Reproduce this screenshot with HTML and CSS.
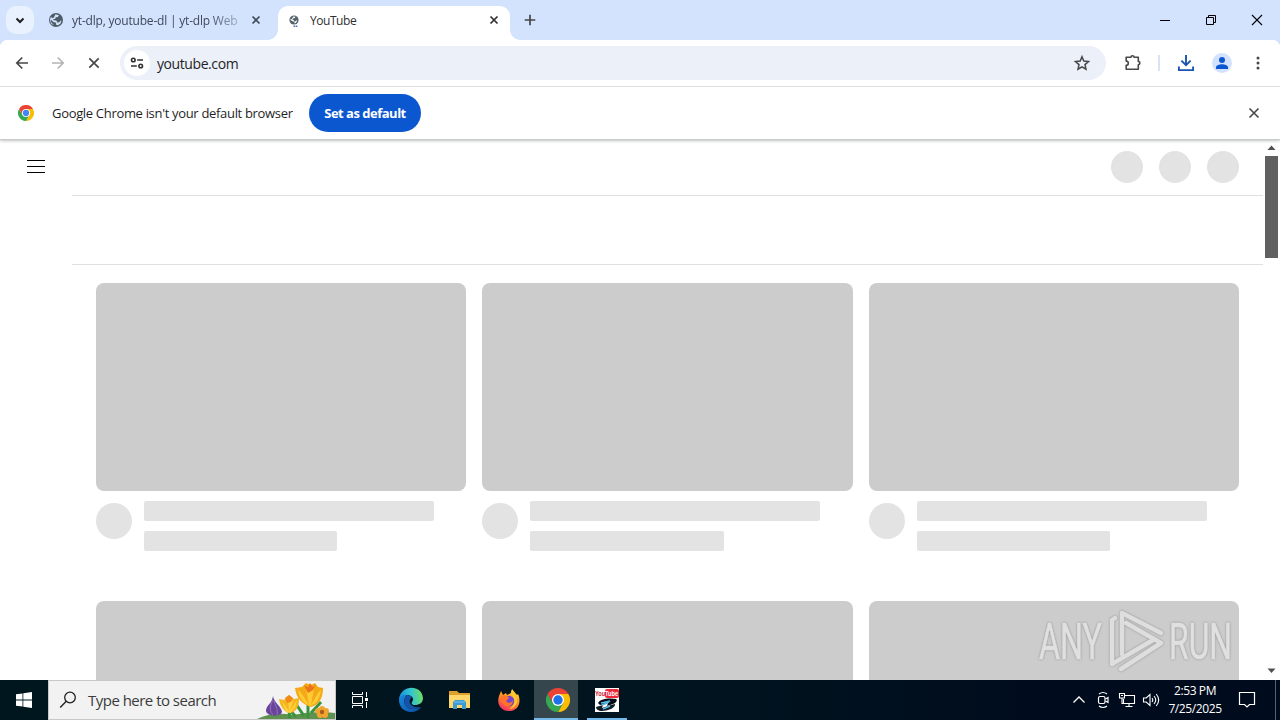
FILE: index.html
```html
<!DOCTYPE html>
<html lang="en">
<head>
    <meta charset="UTF-8">
    <title>YouTube</title>
    <link rel="stylesheet" href="styles.css">
</head>
<body>
<div class="screen">
    <div class="tabstrip">
        <div class="tab-search">
            <svg width="28" height="28" viewBox="0 0 28 28"><path d="M10.5 12.5l3.5 3.5 3.5-3.5" fill="none" stroke="#1f1f1f" stroke-width="2"/></svg>
        </div>
        <div class="tab">
            <svg class="tab-icon" width="16" height="16" viewBox="0 0 16 16">
                <circle cx="8" cy="8" r="7" fill="#4d5b66"/>
                <path d="M7.5 2.3L11 3.2 9.8 5l-2 .3L7 7l-2 .3.5 1 2.800.2 1 2 2-.3 1.200-1.500 1-.200-1 3L10 13.200l-1.700-.2-.3-2.300-2.600-.700L3 7.800 2.600 9l1.200 2.300 2.300 1.600-3-1L1.900 8l1-3 2 1.200L6 5.200z" fill="#d3e2fd"/>
            </svg>
            <span class="tab-title faded">yt-dlp, youtube-dl | yt-dlp Web</span>
            <svg class="tab-close" width="16" height="16" viewBox="0 0 16 16"><path d="M4.500 4.500l7 7m0-7l-7 7" stroke="#40485a" stroke-width="1.600"/></svg>
        </div>
        <div class="tab active">
            <svg class="tab-icon" width="16" height="16" viewBox="0 0 16 16">
                <circle cx="8" cy="8" r="4.600" fill="#55636c"/>
                <path d="M7.300 4.500l2.200.300-.8 1.200-1.300.3-.5 1-1.200.2 1.900.600.6 1.300 1.400-.2.900-.900.6.2-.8 2-1.500.9-.6-1.600-1.600-.6L4.500 8l.2-1.300 1.200.5z" fill="#fff"/>
                <path d="M7.500 14.200h4" stroke="#4870b0" stroke-width="1.500" stroke-dasharray="1.600 .6"/>
            </svg>
            <span class="tab-title">YouTube</span>
            <svg class="tab-close" width="16" height="16" viewBox="0 0 16 16"><path d="M4.500 4.500l7 7m0-7l-7 7" stroke="#303030" stroke-width="1.700"/></svg>
        </div>
        <svg class="new-tab" width="20" height="20" viewBox="0 0 20 20"><path d="M10 4.700v10.600M4.700 10h10.600" stroke="#444746" stroke-width="1.700"/></svg>
        <div class="window-buttons">
            <svg width="46" height="40" viewBox="0 0 46 40"><path d="M18 20.500h10" stroke="#000" fill="none"/></svg>
            <svg width="46" height="40" viewBox="0 0 46 40"><path d="M18.500 17.500h7v7h-7zM20.500 17.500v-2h7v7h-2" stroke="#000" fill="none"/></svg>
            <svg width="46" height="40" viewBox="0 0 46 40"><path d="M18 15l10 10m0-10l-10 10" stroke="#000" stroke-width="1.100" fill="none"/></svg>
        </div>
    </div>

    <div class="toolbar">
        <div class="nav">
            <svg width="20" height="20" viewBox="0 0 20 20"><path d="M16 10H5m5.300-5.500L4.800 10l5.500 5.500" fill="none" stroke="#474747" stroke-width="1.700"/></svg>
            <svg width="20" height="20" viewBox="0 0 20 20"><path d="M4 10h11M9.700 4.500l5.500 5.500-5.500 5.500" fill="none" stroke="#b4b4b4" stroke-width="1.700"/></svg>
            <svg width="20" height="20" viewBox="0 0 20 20"><path d="M5.300 5.300l9.400 9.400m0-9.400l-9.400 9.400" stroke="#474747" stroke-width="1.700"/></svg>
        </div>
        <div class="omnibox">
            <span class="site-chip">
                <svg width="16" height="16" viewBox="0 0 16 16" fill="none" stroke="#303030" stroke-width="1.600"><circle cx="4.300" cy="5" r="1.800"/><path d="M8.200 5H14M2 11h5.800"/><circle cx="11.700" cy="11" r="1.800"/></svg>
            </span>
            <span class="url">youtube.com</span>
            <svg class="star" width="18" height="18" viewBox="0 0 18 18"><path d="M9 2.800l1.800 4.300 4.700.4-3.500 3.100 1 4.600L9 12.800l-4 2.400 1-4.600-3.500-3.100 4.700-.4z" fill="none" stroke="#474747" stroke-width="1.500"/></svg>
        </div>
        <div class="actions">
            <svg width="20" height="20" viewBox="0 0 20 20"><path d="M3.200 4.200H8a1.500 1.500 0 0 1 3 0h4.300v4.300a1.600 1.600 0 0 1 0 3.200v4.500H3.200v-3.900a2.100 2.100 0 0 0 0-4.200V4.200z" fill="none" stroke="#474747" stroke-width="1.600" stroke-linejoin="round"/></svg>
            <span class="divider"></span>
            <svg width="20" height="20" viewBox="0 0 20 20"><path d="M10 2v9.500M5.400 7.600l4.600 4.600 4.600-4.600M2.900 13.500v3.600h14.200v-3.600" fill="none" stroke="#1a56b0" stroke-width="1.900"/></svg>
            <svg width="20" height="20" viewBox="0 0 20 20"><circle cx="10" cy="10" r="10" fill="#d3e3fd"/><circle cx="10" cy="7" r="3" fill="#0b57d0"/><path d="M4 16v-1.800c0-2 3.500-3 6-3s6 1 6 3V16z" fill="#0b57d0"/></svg>
            <svg width="20" height="20" viewBox="0 0 20 20" fill="#474747"><circle cx="10" cy="5" r="1.500"/><circle cx="10" cy="10" r="1.500"/><circle cx="10" cy="15" r="1.500"/></svg>
        </div>
    </div>

    <div class="infobar">
        <svg width="16" height="16" viewBox="0 0 24 24">
            <path d="M12 6h10.400A12 12 0 0 1 12 24l5.200-9z" fill="#fbbc04"/>
            <path d="M1.600 6l5.200 9H17.200L12 24A12 12 0 0 1 1.600 6z" fill="#34a853"/>
            <path d="M1.600 6l5.200 9L12 6h10.400A12 12 0 0 0 1.600 6z" fill="#ea4335"/>
            <circle cx="12" cy="12" r="6" fill="#fff"/><circle cx="12" cy="12" r="4.700" fill="#4285f4"/>
        </svg>
        <span class="message">Google Chrome isn't your default browser</span>
        <button class="default-btn">Set as default</button>
        <svg class="dismiss" width="16" height="16" viewBox="0 0 16 16"><path d="M3.500 3.500l9 9m0-9l-9 9" stroke="#474747" stroke-width="1.600"/></svg>
    </div>

    <div class="viewport">
        <div class="page">
            <div class="masthead">
                <svg width="18" height="14" viewBox="0 0 18 14"><path d="M0 .5h18M0 6.500h18M0 12.500h18" stroke="#000"/></svg>
                <div class="masthead-skeleton"><i></i><i></i><i></i></div>
            </div>
            <div class="chips"></div>
            <div class="video-grid">
                <div class="video"><div class="thumb"></div><div class="details"><div class="avatar"></div><div class="lines"><div class="line"></div><div class="line short"></div></div></div></div>
                <div class="video"><div class="thumb"></div><div class="details"><div class="avatar"></div><div class="lines"><div class="line"></div><div class="line short"></div></div></div></div>
                <div class="video"><div class="thumb"></div><div class="details"><div class="avatar"></div><div class="lines"><div class="line"></div><div class="line short"></div></div></div></div>
                <div class="video"><div class="thumb"></div></div>
                <div class="video"><div class="thumb"></div></div>
                <div class="video"><div class="thumb"></div></div>
            </div>
        </div>
        <div class="scrollbar">
            <svg width="15" height="16" viewBox="0 0 15 16"><path d="M3.500 10l4-4.500 4 4.500z" fill="#505050"/></svg>
            <div class="scroll-thumb"></div>
            <svg class="scroll-down" width="15" height="16" viewBox="0 0 15 16"><path d="M3.500 5.500l4 4.500 4-4.500z" fill="#505050"/></svg>
        </div>
        <svg class="watermark" width="210" height="70" viewBox="0 0 210 70">
            <g class="mark-text">
                <text x="4" y="54" textLength="63" lengthAdjust="spacingAndGlyphs">ANY</text>
                <text x="134" y="54" textLength="63" lengthAdjust="spacingAndGlyphs">RUN</text>
            </g>
            <g class="mark-logo">
                <path d="M87 49V8l39 20"/>
                <path d="M91 18l35 20-40 26"/>
                <path d="M80 13l-3 2v44l41-24"/>
            </g>
        </svg>
    </div>

    <div class="taskbar">
        <div class="start">
            <svg width="16" height="16" viewBox="0 0 16 16" fill="#fff"><path d="M0 2.300l6.500-.9v6.200H0zM7.300 1.300L16 0v7.600H7.300zM0 8.400h6.500v6.200L0 13.700zM7.300 8.400H16V16l-8.700-1.300z"/></svg>
        </div>
        <div class="search">
            <svg width="18" height="18" viewBox="0 0 18 18"><circle cx="11" cy="6.500" r="5.300" fill="none" stroke="#222" stroke-width="1.300"/><path d="M7.200 10.300L1.200 16.500" stroke="#222" stroke-width="1.400"/></svg>
            <span>Type here to search</span>
            <svg class="flowers" width="80" height="38" viewBox="0 0 80 38">
                <path d="M2 38Q18 30 38 34Q60 29 80 32V38z" fill="#60924f"/>
                <path d="M35 37L33 24M53 37l0-15M41 36l-7-8M49 35l-8-12M56 32l10-11" stroke="#39933c" stroke-width="3" fill="none"/>
                <path d="M18 15c1 7 9 11 9 16-1 5-15 5-16-1 0-6 6-7 7-15z" fill="#68449b"/>
                <path d="M18 19c-4 7-3 12 0 15m1-14c2 6 4 9 3 14" stroke="#9572bb" fill="none"/>
                <path d="M24 18l5 1 5-5 5 4 5-1c0 8-2 14-9 15-6-1-10-7-11-14z" fill="#f5b51d"/>
                <path d="M26 19l8 11-1-12 3-1 2 3-3 10 7-11-2 8-5 5-4-1z" fill="#ffcf3c"/>
                <path d="M40 7l7-1 4-4 5 2 4-2 3 4 5 1c0 10-4 17-12 19-8-2-15-9-16-19z" fill="#f4aa16"/>
                <path d="M43 9c4 3 7 9 11 15l-3-17 4-4 4 4-3 17c4-6 6-12 10-15-1 9-5 14-11 16-6-2-11-8-12-16z" fill="#ffcb35"/>
                <path d="M49 4l4 2 2-4 3 4 3-3-3 6-5 3z" fill="#ec7418"/>
                <path d="M30 17l4-3 4 3-2 4-4 1z" fill="#ef8a1b"/>
                <g fill="#f2a52e"><circle cx="67" cy="28" r="3"/><circle cx="71" cy="30" r="3"/><circle cx="70" cy="34" r="3"/><circle cx="65" cy="34" r="3"/><circle cx="63" cy="30" r="3"/></g><circle cx="67" cy="31" r="2.200" fill="#a95c20"/>
            </svg>
        </div>
        <div class="apps">
            <div class="app">
                <svg width="18" height="18" viewBox="0 0 18 18" fill="none" stroke="#fff"><path d="M1.500 1v2.500h10V1M1.500 5.500h10v7h-10zM1.500 17v-2.500h10V17M15.500 1v5M15.500 11v6"/><path d="M14 7h3v3h-3z" fill="#fff" stroke="none"/></svg>
            </div>
            <div class="app">
                <svg width="26" height="26" viewBox="0 0 26 26">
                    <defs>
                        <linearGradient id="edge-top" x1="0" y1=".5" x2="1" y2=".4"><stop offset="0" stop-color="#1491dc"/><stop offset=".5" stop-color="#30c3d3"/><stop offset="1" stop-color="#71df60"/></linearGradient>
                        <linearGradient id="edge-low" x1="0" y1="0" x2=".7" y2="1"><stop offset="0" stop-color="#188be0"/><stop offset="1" stop-color="#1056b0"/></linearGradient>
                    </defs>
                    <path d="M1 13C2-3 24-3 25 11c0 5-4 7-8 7-3 0-4-2-3-3 3-4-1-7-5-7-4 0-7 2-8 5z" fill="url(#edge-top)"/>
                    <path d="M1 13c0-4 4-6 8-5-5 4-3 14 6 14 4 0 6-1 8-2-2 3-6 5-10 5C6 25 1 20 1 13z" fill="url(#edge-low)"/>
                    <path d="M9 8c-5 5-3 14 6 14 4 0 6-1 8-2-9 2-15-5-9-10-1-1-3-2-5-2z" fill="#1453a6"/>
                </svg>
            </div>
            <div class="app">
                <svg width="24" height="24" viewBox="0 0 24 24"><path d="M1 3h8l2 2h11v15H1z" fill="#dda02c"/><path d="M1 7h21v13H1z" fill="#ffd669"/><path d="M5 21v-7l2-2h9l2 2v7h-4v-4H9v4z" fill="#3c9ad5"/><path d="M6 14h11" stroke="#76c5ec"/></svg>
            </div>
            <div class="app">
                <svg width="24" height="24" viewBox="0 0 24 24">
                    <defs><linearGradient id="fox" x1=".8" y1="0" x2=".3" y2="1"><stop offset="0" stop-color="#ffe33f"/><stop offset=".45" stop-color="#ff9722"/><stop offset="1" stop-color="#f42c68"/></linearGradient></defs>
                    <path d="M4 3l2 4 3-2 1 2 4-2 1-4 5 6 1-1c3 6 2 16-8 17C5 24-1 17 2 8z" fill="url(#fox)"/>
                    <circle cx="12" cy="13" r="5.300" fill="#7345d2"/><path d="M5 8c3-2 6 0 7 2l-3 3c2 3 6 2 7-1 0 5-4 7-7 6-5-2-6-7-4-10z" fill="#ff7428"/>
                    <path d="M15 2c1 5 6 6 5 12-1 4-4 7-8 7 5-3 7-8 4-12-2-2-3-5-1-7z" fill="#ffc62d"/>
                </svg>
            </div>
            <div class="app running">
                <svg width="24" height="24" viewBox="0 0 24 24">
                    <path d="M12 6h10.400A12 12 0 0 1 12 24l5.200-9z" fill="#fbbc04"/>
                    <path d="M1.600 6l5.200 9H17.200L12 24A12 12 0 0 1 1.600 6z" fill="#34a853"/>
                    <path d="M1.600 6l5.200 9L12 6h10.400A12 12 0 0 0 1.600 6z" fill="#ea4335"/>
                    <circle cx="12" cy="12" r="6" fill="#fff"/><circle cx="12" cy="12" r="4.700" fill="#1a73e8"/>
                </svg>
            </div>
            <div class="app opened">
                <svg width="24" height="24" viewBox="0 0 24 24">
                    <path d="M0 0h24v24H0z" fill="#fff"/><rect x="10" y="1" width="14" height="9" rx="2" fill="#ed2939"/>
                    <text class="yt" x="0" y="8" textLength="23" lengthAdjust="spacingAndGlyphs"><tspan fill="#c51e30">You</tspan><tspan fill="#fff">Tube</tspan></text>
                    <path d="M3 15c3-5 13-5 18-4 2 1 0 4-3 5l-6 2 1-3-8 2z" fill="#050b14"/><path d="M1 19l7-2-1 3 9-3 4-1c1 3-6 7-13 7-4 0-6-2-6-4z" fill="#101b26"/><path d="M6 15l9-2-3 2-5 2M8 21l7-3" fill="none" stroke="#55b9e5" stroke-width="1.500"/>
                </svg>
            </div>
        </div>
        <div class="tray">
            <svg width="14" height="20" viewBox="0 0 14 20"><path d="M1.500 12.500L7 7l5.500 5.500" fill="none" stroke="#fff" stroke-width="1.300"/></svg>
            <svg width="14" height="20" viewBox="0 0 14 20" fill="none" stroke="#fff" stroke-width="1.200"><rect x="2.500" y="6.500" width="6.500" height="7" rx="1.500"/><path d="M9.500 9l2.500-1.500v5L9.500 11M3 4q4-3 8 0M3 16q4 3 8 0"/></svg>
            <svg width="18" height="20" viewBox="0 0 18 20" fill="none" stroke="#fff" stroke-width="1.100"><path d="M6.500 5.500h10v8h-11V9M11 13.500v3M7.500 16.500h7"/><path d="M1.500 3.500h5V8h-5zM4 8v5.500h2M3 5.500h2"/></svg>
            <svg width="18" height="20" viewBox="0 0 18 20" fill="none" stroke="#fff" stroke-width="1.100"><path d="M1.500 8h2.700L8 4.500v11L4.200 12H1.500zM10 8q1.500 2 0 4M12 6q3.500 4 0 8M14.200 4q5 6 0 12"/></svg>
        </div>
        <div class="clock"><span>2:53 PM</span><span>7/25/2025</span></div>
        <svg class="notifications" width="18" height="18" viewBox="0 0 18 18"><path d="M1.500 1.500h15v12h-5L9 16l-2.500-2.500h-5z" fill="none" stroke="#fff" stroke-width="1.200"/></svg>
        <div class="show-desktop"></div>
    </div>
</div>
</body>
</html>
```
FILE: styles.css
```css
*{
    box-sizing: border-box;
}
body{
    margin: 0;
    font-family: "Open Sans", "Noto Sans", sans-serif;
    font-size: 12px;
    color: #1f1f1f;
}
svg{
    display: block;
    flex: none;
}
.screen{
    display: flex;
    flex-direction: column;
    width: 1280px;
    height: 720px;
    overflow: hidden;
    background: #fff;
}

/* tabs */
.tabstrip{
    display: flex;
    align-items: center;
    height: 40px;
    flex: none;
    padding-left: 6px;
    background: #d3e2fd;
}
.tab-search{
    width: 28px;
    height: 28px;
    border-radius: 10px;
    background: #e9f0fe;
}
.tab{
    display: flex;
    align-items: center;
    width: 232px;
    height: 34px;
    padding: 0 8px 6px;
    margin: 6px 0 0 6px;
}
.tab.active{
    position: relative;
    border-radius: 10px 10px 0 0;
    background: #fff;
}
.tab.active:before,
.tab.active:after{
    content: "";
    position: absolute;
    bottom: 0;
    width: 10px;
    height: 10px;
}
.tab.active:before{
    left: -10px;
    background: radial-gradient(circle at 0 0, transparent 9.5px, #fff 10px);
}
.tab.active:after{
    right: -10px;
    background: radial-gradient(circle at 100% 0, transparent 9.5px, #fff 10px);
}
.tab-title{
    width: 167px;
    margin-left: 8px;
    padding-top: 2px;
    overflow: hidden;
    white-space: nowrap;
    line-height: 18px;
    letter-spacing: -.45px;
    color: #303030;
}
.faded{
    color: #40485a;
    letter-spacing: -.2px;
    -webkit-mask-image: linear-gradient(to right, #000 82%, rgba(0,0,0,.3));
    mask-image: linear-gradient(to right, #000 82%, rgba(0,0,0,.3));
}
.tab-close{
    margin-left: auto;
}
.new-tab{
    margin-left: 10px;
}
.window-buttons{
    display: flex;
    margin-left: auto;
}

/* toolbar */
.toolbar{
    display: flex;
    align-items: center;
    height: 47px;
    flex: none;
    padding: 0 12px;
    border-bottom: 1px solid #e1e3e6;
    background: radial-gradient(circle at 8px 8px, #fff 8px, #d3e2fd 8.5px) 0 0 / 8px 8px no-repeat,
                radial-gradient(circle at 0 8px, #fff 8px, #d3e2fd 8.5px) 100% 0 / 8px 8px no-repeat,
                #fff;
}
.nav{
    display: flex;
    gap: 16px;
}
.omnibox{
    display: flex;
    align-items: center;
    width: 986px;
    height: 34px;
    margin-left: 16px;
    padding: 0 15px 0 4px;
    border-radius: 17px;
    background: #ecf0f9;
}
.site-chip{
    display: flex;
    align-items: center;
    justify-content: center;
    width: 26px;
    height: 26px;
    border-radius: 50%;
    background: #fff;
}
.url{
    margin-left: 7px;
    font-size: 14px;
    letter-spacing: -.42px;
}
.star{
    margin-left: auto;
}
.actions{
    display: flex;
    align-items: center;
    gap: 16px;
    margin-left: 17px;
}
.divider{
    width: 2px;
    height: 16px;
    margin: 0 -1px;
    background: #d9e3f7;
}
.divider + svg{
    margin-left: 1px;
}

/* default browser prompt */
.infobar{
    position: relative;
    z-index: 1;
    display: flex;
    align-items: center;
    height: 52px;
    flex: none;
    padding: 0 18px;
    background: #fff;
    box-shadow: 0 1px 1px #c8cacc, 0 2px 3px rgba(60,64,67,.3);
}
.message{
    width: 241px;
    margin-left: 18px;
    font-size: 13px;
    letter-spacing: -.32px;
    white-space: nowrap;
}
.default-btn{
    width: 112px;
    height: 38px;
    margin-left: 16px;
    padding: 0;
    border: 0;
    border-radius: 19px;
    background: #0b57d0;
    color: #fff;
    font: 700 13px "Open Sans", "Noto Sans", sans-serif;
    letter-spacing: -.5px;
}
.dismiss{
    margin-left: auto;
}

/* page skeleton */
.viewport{
    position: relative;
    display: flex;
    flex: 1;
    min-height: 0;
    overflow: hidden;
}
.page{
    width: 1263px;
}
.masthead{
    display: flex;
    align-items: center;
    justify-content: space-between;
    height: 56px;
    padding: 0 24px 0 27px;
}
.masthead-skeleton{
    display: flex;
    gap: 16px;
}
.masthead-skeleton i{
    width: 32px;
    height: 32px;
    border-radius: 50%;
    background: #e3e3e3;
}
.chips{
    height: 70px;
    margin-left: 72px;
    border: solid #e0e0e0;
    border-width: 1px 0;
}
.video-grid{
    display: grid;
    grid-template-columns: repeat(3, 1fr);
    grid-auto-rows: 318px;
    column-gap: 16px;
    padding: 18px 24px 0 96px;
}
.thumb{
    height: 208px;
    border-radius: 8px;
    background: #ccc;
}
.details{
    display: flex;
    padding-top: 10px;
}
.avatar{
    width: 36px;
    height: 36px;
    margin: 2px 12px 0 0;
    border-radius: 50%;
    background: #e3e3e3;
}
.line{
    width: 290px;
    height: 20px;
    margin-bottom: 10px;
    border-radius: 2px;
    background: #e3e3e3;
}
.short{
    width: 193.3px;
}
.scrollbar{
    display: flex;
    flex-direction: column;
    width: 17px;
    padding: 1px 0 1px 1px;
}
.scroll-thumb{
    width: 13px;
    height: 102px;
    margin-left: 1px;
    background: #606060;
}
.scroll-down{
    margin-top: auto;
}
.watermark{
    position: absolute;
    left: 1035px;
    bottom: 5px;
    filter: drop-shadow(0 0 1px rgba(100,100,100,.6));
}
.mark-text{
    font: 400 50px Roboto, sans-serif;
    fill: #e0e0e0;
    stroke: #e0e0e0;
    stroke-width: .6;
}
.mark-logo{
    fill: none;
    stroke: #dedede;
    stroke-width: 4.5;
    stroke-linecap: round;
    stroke-linejoin: round;
}

/* taskbar */
.taskbar{
    display: flex;
    align-items: center;
    height: 40px;
    flex: none;
    background: linear-gradient(to right, #00161f, #00151f 50%, #000b1d 85%);
    color: #fff;
}
.start{
    display: flex;
    justify-content: center;
    width: 48px;
}
.search{
    display: flex;
    align-items: center;
    width: 288px;
    height: 40px;
    padding-left: 10px;
    border: 1px solid #c8c8c8;
    background: #f2f2f2;
    color: #3b3b3b;
    font-size: 15px;
}
.search span{
    margin-left: 11px;
    letter-spacing: -.52px;
    white-space: nowrap;
}
.flowers{
    margin-left: auto;
}
.apps{
    display: flex;
    gap: 5px;
    padding-left: 2px;
}
.app{
    display: flex;
    align-items: center;
    justify-content: center;
    width: 44px;
    height: 40px;
}
.app:first-child{
    margin-right: 2px;
}
.running{
    margin-left: -2px;
    padding-left: 4px;
    background: #35464d;
    box-shadow: inset 0 -2px #76b9ed;
}
.opened{
    margin-left: 2px;
    background: linear-gradient(#76b9ed, #76b9ed) 2px 100% / 40px 2px no-repeat;
}
.yt{
    font: bold 8px "Liberation Sans", sans-serif;
}
.tray{
    display: flex;
    gap: 8px;
    margin-left: auto;
}
.tray svg:nth-child(2){
    margin-left: 2px;
}
.tray svg:nth-child(3){
    margin-right: -2px;
}
.clock{
    display: flex;
    flex-direction: column;
    align-items: center;
    width: 62px;
    margin-left: 4px;
    line-height: 18px;
    letter-spacing: -.4px;
}
.notifications{
    margin-left: 12px;
}
.show-desktop{
    width: 5px;
    height: 40px;
    margin-left: 19px;
    border-left: 1px solid #5a626c;
}
```
